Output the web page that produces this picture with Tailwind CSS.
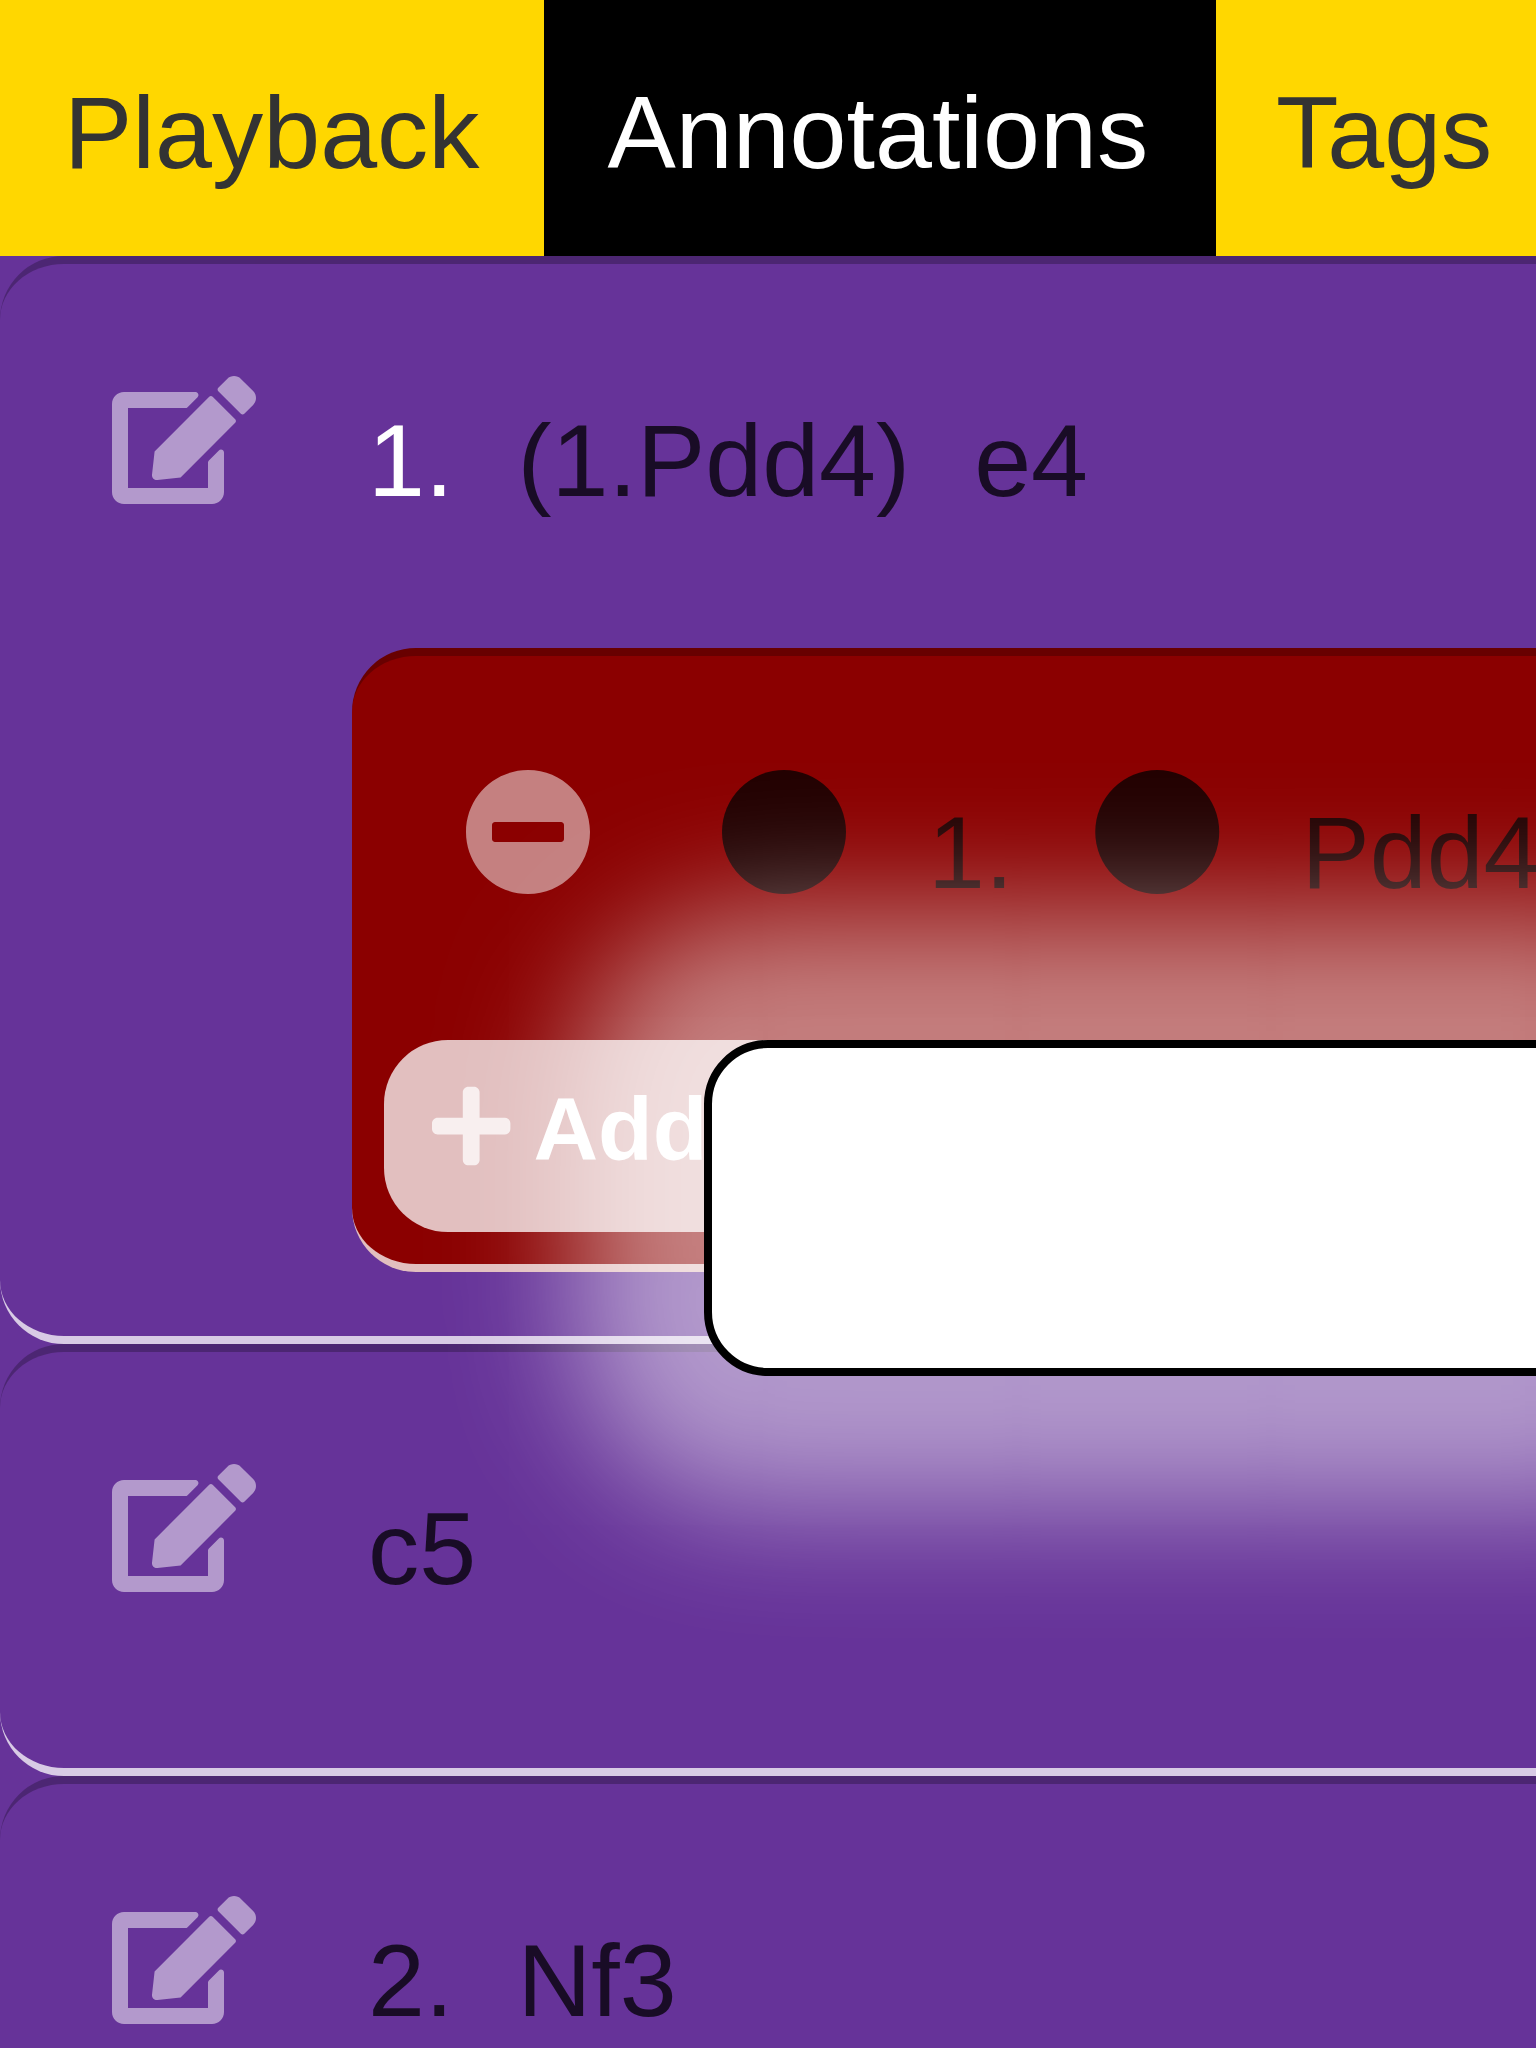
<!DOCTYPE html>
<html lang="en">
<head>
<meta charset="utf-8">
<title>Annotations</title>
<script src="https://cdn.jsdelivr.net/npm/@tailwindcss/browser@4"></script>
</head>
<body class="overflow-hidden bg-[#663399]">
<svg class="hidden">
  <symbol id="edit" viewBox="0 0 576 512"><path d="M402.6 83.2l90.2 90.2c3.8 3.8 3.8 10 0 13.8L274.4 405.6l-92.8 10.3c-12.4 1.4-22.9-9.1-21.5-21.5l10.3-92.8L388.8 83.2c3.8-3.8 10-3.8 13.8 0zm162-22.9l-48.8-48.8c-15.2-15.2-39.9-15.2-55.2 0l-35.4 35.4c-3.8 3.8-3.8 10 0 13.8l90.2 90.2c3.8 3.8 10 3.8 13.8 0l35.4-35.4c15.2-15.3 15.2-40 0-55.2zM384 346.2V448H64V128h229.8c3.2 0 6.2-1.3 8.5-3.5l40-40c7.6-7.6 2.2-20.5-8.5-20.5H48C21.5 64 0 85.5 0 112v352c0 26.5 21.5 48 48 48h352c26.5 0 48-21.5 48-48V306.2c0-10.7-12.9-16-20.5-8.5l-40 40c-2.2 2.3-3.5 5.3-3.5 8.5z"/></symbol>
</svg>
<div class="relative h-[2048px] w-[1536px] overflow-hidden bg-[#663399] font-['Liberation_Sans',sans-serif] text-[102.4px] leading-[128px] whitespace-nowrap text-black/75">
  <nav class="flex h-64 w-[2400px] bg-[#ffd700] text-[#333]">
    <div class="w-[544px] shrink-0 px-16 pt-[69px]">Playback</div>
    <div class="w-[672px] shrink-0 bg-black px-[63.4px] pt-[69px] text-white">Annotations</div>
    <div class="shrink-0 px-[60px] pt-[69px]">Tags</div>
  </nav>
  <main class="flex w-[2400px] flex-col">
    <section class="h-[1088px] rounded-[64px] border-y-8 border-t-black/25 border-b-white/75 bg-[#663399] pl-28">
      <div class="flex h-96 items-start pt-28">
        <svg class="h-32 w-36 fill-white/50"><use href="#edit"/></svg>
        <div class="ml-28 flex gap-16 pt-[21px]"><span class="text-white">1.</span><span>(1.Pdd4)</span><span>e4</span></div>
      </div>
      <div class="ml-60 h-[624px] rounded-[64px] border-y-8 border-t-black/25 border-b-white/75 bg-[#8b0000] px-8">
        <div class="flex h-96 items-start pt-28 pl-20">
          <svg class="h-32 w-32 shrink-0 fill-white/50" viewBox="0 0 512 512"><path d="M256 8C119 8 8 119 8 256s111 248 248 248 248-111 248-248S393 8 256 8zM124 296c-6.600 0-12-5.400-12-12v-56c0-6.600 5.400-12 12-12h264c6.600 0 12 5.400 12 12v56c0 6.600-5.400 12-12 12H124z"/></svg>
          <svg class="ml-32 h-32 w-32 shrink-0 fill-black/75" viewBox="0 0 512 512"><circle cx="256" cy="256" r="248"/></svg>
          <span class="mr-20 ml-20 pt-[21px]">1.</span>
          <svg class="h-32 w-32 shrink-0 fill-black/75" viewBox="0 0 512 512"><circle cx="257" cy="256" r="248"/></svg>
          <span class="ml-20 pt-[21px]">Pdd4</span>
        </div>
        <button class="flex h-48 w-[640px] items-start rounded-[64px] bg-white/75 pt-[41.4px] pl-12 text-[89.6px] leading-[96px] font-bold text-white">
          <svg class="h-[89.6px] w-[78.4px] shrink-0 overflow-visible fill-white/75" viewBox="0 -1.500 448 512"><path d="M416 208H272V64c0-17.670-14.330-32-32-32h-32c-17.670 0-32 14.330-32 32v144H32c-17.670 0-32 14.330-32 32v32c0 17.670 14.330 32 32 32h144v144c0 17.670 14.330 32 32 32h32c17.670 0 32-14.330 32-32V304h144c17.670 0 32-14.330 32-32v-32c0-17.670-14.330-32-32-32z"/></svg>
          <span class="ml-[23px]">Add</span>
        </button>
      </div>
    </section>
    <section class="flex h-[432px] items-start rounded-[64px] border-y-8 border-t-black/25 border-b-white/75 bg-[#663399] pt-28 pl-28">
      <svg class="h-32 w-36 fill-white/50"><use href="#edit"/></svg>
      <div class="ml-28 pt-[21px]">c5</div>
    </section>
    <section class="flex h-[432px] items-start rounded-[64px] border-y-8 border-t-black/25 border-b-white/75 bg-[#663399] pt-28 pl-28">
      <svg class="h-32 w-36 fill-white/50"><use href="#edit"/></svg>
      <div class="ml-28 flex gap-16 pt-[21px]"><span>2.</span><span>Nf3</span></div>
    </section>
  </main>
  <div class="absolute top-[1040px] left-[704px] h-[336px] w-[1600px] rounded-[64px] border-8 border-black bg-white shadow-[0_0_128px_128px_rgba(255,255,255,0.5)]"></div>
</div>
</body>
</html>
